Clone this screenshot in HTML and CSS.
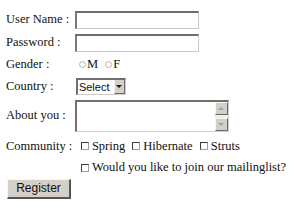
FILE: index.html
```html
<!DOCTYPE html>
<html lang="en">
<head>
    <meta charset="UTF-8">
    <title>Register</title>
    <link rel="stylesheet" href="styles.css">
</head>
<body>
    <form class="register-form">
        <table class="form-table">
            <tr class="row-text">
                <td class="label">User Name :</td>
                <td><input type="text" class="text-field"></td>
            </tr>
            <tr class="row-text">
                <td class="label">Password :</td>
                <td><input type="password" class="text-field"></td>
            </tr>
            <tr class="row-gender">
                <td class="label">Gender :</td>
                <td>
                    <label class="choice"><input type="radio" name="gender" class="radio">M</label>
                    <label class="choice"><input type="radio" name="gender" class="radio">F</label>
                </td>
            </tr>
            <tr class="row-country">
                <td class="label">Country :</td>
                <td>
                    <div class="select-box">
                        <select class="select-field">
                            <option>Select</option>
                            <option>India</option>
                            <option>USA</option>
                        </select>
                        <span class="select-arrow"><span class="arrow-down"></span></span>
                    </div>
                </td>
            </tr>
            <tr class="row-about">
                <td class="label">About you :</td>
                <td>
                    <div class="textarea-box">
                        <textarea class="textarea-field"></textarea>
                        <div class="scrollbar">
                            <span class="scroll-btn"><span class="arrow-up"></span></span>
                            <span class="scroll-btn"><span class="arrow-down grey"></span></span>
                        </div>
                    </div>
                </td>
            </tr>
            <tr class="row-community">
                <td class="label">Community :</td>
                <td>
                    <label class="check"><input type="checkbox" class="checkbox">Spring</label>
                    <label class="check"><input type="checkbox" class="checkbox">Hibernate</label>
                    <label class="check"><input type="checkbox" class="checkbox">Struts</label>
                </td>
            </tr>
            <tr class="row-mailing">
                <td></td>
                <td>
                    <label class="check"><input type="checkbox" class="checkbox">Would you like to join our mailinglist?</label>
                </td>
            </tr>
            <tr class="row-submit">
                <td colspan="2"><button type="submit" class="btn-register">Register</button></td>
            </tr>
        </table>
    </form>
</body>
</html>
```

FILE: styles.css
```css
body {
    margin: 0;
    background: #fff;
    color: #111;
    font-family: "Liberation Serif", "Times New Roman", serif;
    font-size: 12.5px;
}

.register-form {
    padding: 8px 0 0 6px;
}

.form-table {
    border-collapse: collapse;
}

.form-table td {
    padding: 0;
    vertical-align: middle;
    white-space: nowrap;
}

.label {
    width: 69px;
}

.row-text { height: 23px; }
.row-gender { height: 21px; }
.row-country { height: 22px; }
.row-about { height: 37px; }
.row-community { height: 25px; }
.row-mailing { height: 18px; }
.row-submit { height: 23px; }

.text-field {
    box-sizing: border-box;
    display: block;
    width: 124px;
    height: 18px;
    margin: 0;
    padding: 0 2px;
    border-top: 2px solid #6e6e6e;
    border-left: 2px solid #7a7a7a;
    border-right: 1px solid #c8c8c8;
    border-bottom: 1px solid #c8c8c8;
    outline: none;
}

/* radios */
.choice {
    display: inline-flex;
    align-items: center;
    margin-right: 4px;
}

.choice:first-child {
    margin-left: 4px;
}

.radio {
    appearance: none;
    width: 7px;
    height: 7px;
    margin: 0 1px 0 0;
    border: 1px solid #b4b4b4;
    border-radius: 50%;
    background: #fff;
}

/* select */
.select-box {
    box-sizing: border-box;
    display: flex;
    width: 50px;
    height: 17px;
    margin-left: 1px;
    border-top: 2px solid #707070;
    border-left: 2px solid #707070;
    border-right: 1px solid #cfcfcf;
    border-bottom: 1px solid #cfcfcf;
}

.select-field {
    appearance: none;
    flex: 1;
    min-width: 0;
    margin: 0;
    padding: 0 0 0 1px;
    border: none;
    background: #fff;
    font-family: "Liberation Sans", Arial, sans-serif;
    font-size: 11px;
    color: #111;
    outline: none;
}

.select-arrow {
    display: flex;
    align-items: center;
    justify-content: center;
    width: 11px;
    background: #d4d0c8;
    border-left: 1px solid #f4f4f4;
    border-right: 1px solid #6a6a6a;
    border-bottom: 1px solid #6a6a6a;
    box-sizing: border-box;
}

.arrow-down {
    width: 0;
    height: 0;
    border-left: 3px solid transparent;
    border-right: 3px solid transparent;
    border-top: 3px solid #111;
}

.arrow-up {
    width: 0;
    height: 0;
    border-left: 3px solid transparent;
    border-right: 3px solid transparent;
    border-bottom: 3px solid #a0a0a0;
}

.arrow-down.grey {
    border-top-color: #a0a0a0;
}

/* textarea */
.textarea-box {
    box-sizing: border-box;
    display: flex;
    width: 154px;
    height: 32px;
    border-top: 2px solid #707070;
    border-left: 2px solid #707070;
    border-right: 1px solid #cfcfcf;
    border-bottom: 1px solid #cfcfcf;
}

.textarea-field {
    flex: 1;
    min-width: 0;
    margin: 0;
    padding: 1px;
    border: none;
    resize: none;
    outline: none;
    overflow: hidden;
}

.scrollbar {
    display: flex;
    flex-direction: column;
    justify-content: space-between;
    width: 13px;
    background: #f1efe9;
}

.scroll-btn {
    box-sizing: border-box;
    display: flex;
    align-items: center;
    justify-content: center;
    height: 13px;
    background: #d4d0c8;
    border-top: 1px solid #f4f4f4;
    border-left: 1px solid #f4f4f4;
    border-right: 1px solid #6a6a6a;
    border-bottom: 1px solid #6a6a6a;
}

/* checkboxes */
.check {
    display: inline-flex;
    align-items: center;
    margin-right: 4px;
}

.check:first-child {
    margin-left: 6px;
}

.checkbox {
    appearance: none;
    box-sizing: border-box;
    width: 8px;
    height: 8px;
    margin: 0 3px 0 0;
    border: 1px solid #3c3c3c;
    border-right-color: #a0a0a0;
    border-bottom-color: #a0a0a0;
    background: #fff;
}

/* button */
.btn-register {
    box-sizing: border-box;
    display: block;
    width: 64px;
    height: 20px;
    margin-left: 1px;
    padding: 0;
    background: #d4d0c8;
    border-top: 1px solid #f8f8f8;
    border-left: 1px solid #f8f8f8;
    border-right: 2px solid #555;
    border-bottom: 2px solid #555;
    font-family: "Liberation Sans", Arial, sans-serif;
    font-size: 12px;
    color: #111;
}
```
